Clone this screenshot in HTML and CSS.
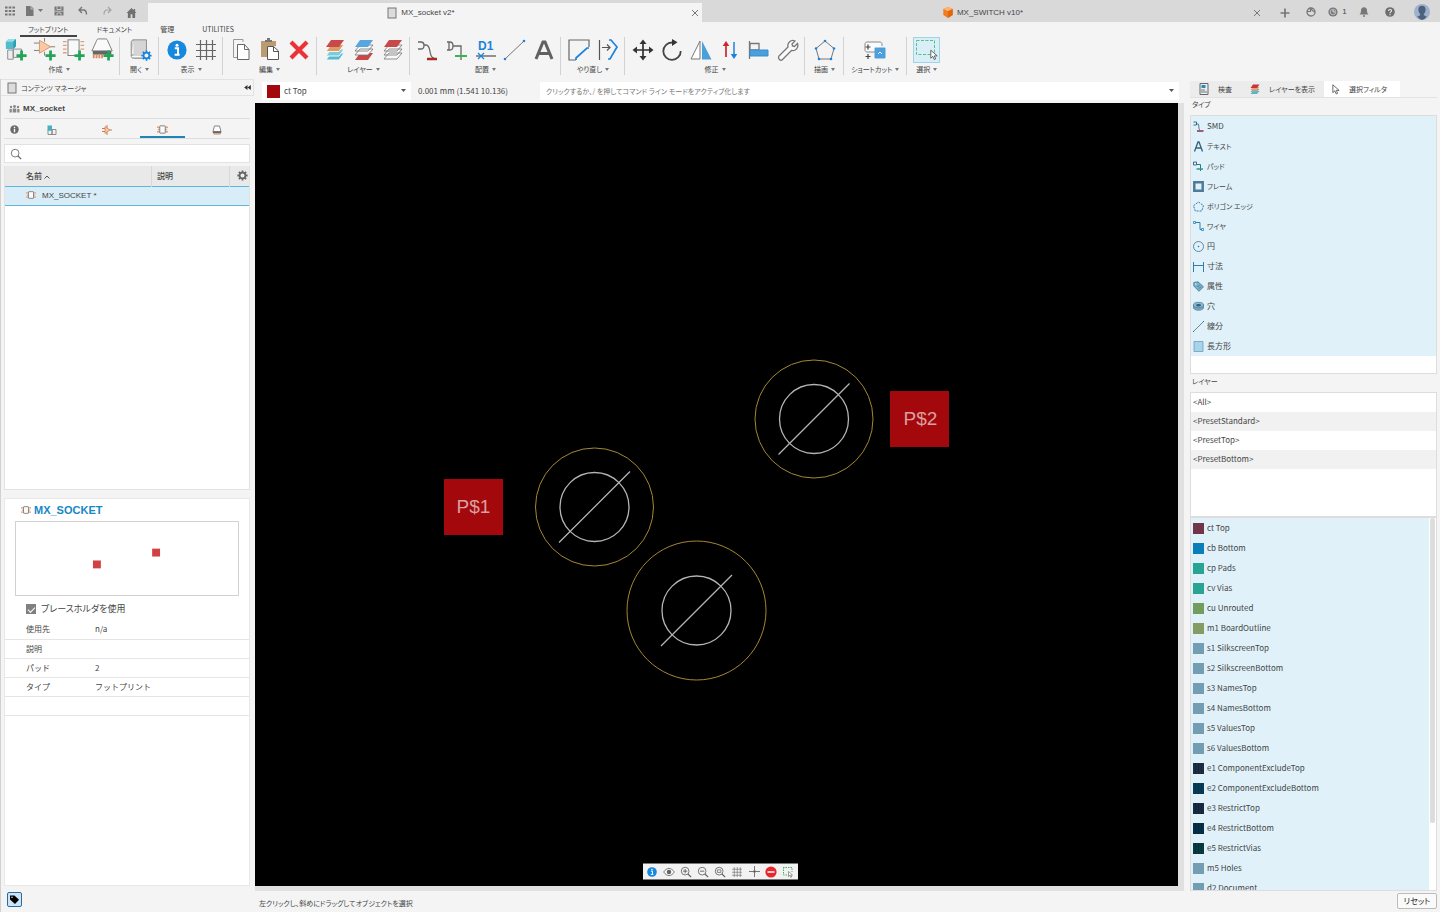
FILE: index.html
```html
<!DOCTYPE html>
<html lang="ja">
<head>
<meta charset="utf-8">
<meta name="viewport" content="width=device-width, initial-scale=1">
<title>MX_socket v2*</title>
<link rel="stylesheet" href="styles.css">
</head>
<body>
<svg class="defs" aria-hidden="true">
  <symbol id="plus" viewBox="0 0 12 12"><path d="M6 0.5v11M0.5 6h11" stroke="#22a45a" stroke-width="3"/></symbol>
  <symbol id="sheet" viewBox="0 0 10 12"><rect x="1" y="1" width="8" height="10" fill="#dcdcdc" stroke="#777"/></symbol>
  <symbol id="chip" viewBox="0 0 12 12"><path d="M0 3.500h3M0 8.500h3M9 3.500h3M9 8.500h3M1 6h2M9 6h2" stroke="#e2a27a" stroke-width="1.500"/><rect x="3" y="2" width="6" height="8" rx="0.5" fill="#fafafa" stroke="#777"/></symbol>
  <symbol id="info" viewBox="0 0 20 20"><circle cx="10" cy="10" r="9.6" fill="#1688de"/><circle cx="10" cy="5.2" r="1.5" fill="#fff"/><path d="M7.8 8.2H11v6.3M7.6 14.8h5" stroke="#fff" stroke-width="2" fill="none"/></symbol>
  <symbol id="grid" viewBox="0 0 24 24"><path d="M6.5 2v20M12.5 2v20M18.500 2v20M2 6.500h20M2 12.500h20M2 18.500h20" stroke="#666" stroke-width="1.2"/></symbol>
  <symbol id="lens" viewBox="0 0 14 14"><circle cx="6" cy="6" r="4.500" fill="none" stroke="#666"/><path d="M9.300 9.300l3.700 3.700" stroke="#666" stroke-width="1.500"/></symbol>
  <symbol id="close" viewBox="0 0 8 8"><path d="M1 1l6 6M7 1L1 7" stroke="#777"/></symbol>
  <symbol id="arrow" viewBox="0 0 10 14"><path d="M1 1v10l2.500-2.300 1.800 4 1.800-.8-1.800-3.800H9z" fill="#fff" stroke="#444"/></symbol>
  <symbol id="gear" viewBox="0 0 14 14"><path d="M7 0.500v13M.5 7h13M2.400 2.400l9.200 9.200M11.600 2.400l-9.200 9.200" stroke="currentColor" stroke-width="2.300"/><circle cx="7" cy="7" r="4.700" fill="currentColor"/><circle cx="7" cy="7" r="2.500" class="gear-hole"/></symbol>
</svg>

<header class="topbar">
  <nav class="quick" aria-label="クイック アクセス">
    <button aria-label="データ パネル"><svg width="10" height="10" viewBox="0 0 10 10"><path d="M0 1.500h10M0 5h10M0 8.500h10" stroke="#777" stroke-width="2.200" stroke-dasharray="2.600 1.100"/></svg></button>
    <button class="wide" aria-label="ファイル"><svg width="18" height="10" viewBox="0 0 18 10"><path d="M1 0h5l2.500 2.500V10H1z" fill="#777"/><path d="M6 0v3h3" stroke="#d9d9d9" fill="none" stroke-width=".7"/><path d="M13 3h5l-2.500 3z" fill="#777"/></svg></button>
    <button aria-label="保存"><svg width="10" height="10" viewBox="0 0 10 10"><path d="M.5.500h9v9h-9z" fill="#777"/><path d="M3 .5v3h4v-3M3 9.500V7h4v2.500M.5 5.200h9" stroke="#d9d9d9" stroke-width=".8" fill="none"/></svg></button>
    <button aria-label="元に戻す"><svg width="10" height="10" viewBox="0 0 10 10"><path d="M4 1L1 4l3 3M1 4h4.500c2 0 3 1.500 3 4.500" fill="none" stroke="#777" stroke-width="1.400"/></svg></button>
    <button aria-label="やり直し"><svg width="10" height="10" viewBox="0 0 10 10"><path d="M6 1l3 3-3 3M9 4H5C3 4 2 5.500 2 8.500" fill="none" stroke="#a5a5a5" stroke-width="1.200"/></svg></button>
    <button class="home" aria-label="ホーム"><svg width="11" height="10" viewBox="0 0 12 11"><path d="M6 0L0.500 5.500H2V11h3V7h2v4h3V5.500h1.500L10 4V1H8.500v1.500z" fill="#707070"/></svg></button>
  </nav>
  <div class="doc-tabs" role="tablist">
    <div class="doc-tab active"><button role="tab" aria-selected="true"><svg width="10" height="12"><use href="#sheet"/></svg>MX_socket v2*</button><button class="close" aria-label="閉じる"><svg width="8" height="8"><use href="#close"/></svg></button></div>
    <div class="doc-tab"><button role="tab"><svg width="10" height="11" viewBox="0 0 10 11"><path d="M5 0l4.700 2v6L5 11 .3 8V2z" fill="#ef7d1f"/><path d="M5 0l4.700 2L5 4.200.3 2z" fill="#ffb36b"/><path d="M5 4.200V11l4.700-3V2z" fill="#df6510"/></svg>MX_SWITCH v10*</button><button class="close" aria-label="閉じる"><svg width="8" height="8"><use href="#close"/></svg></button></div>
  </div>
  <div class="account">
    <button aria-label="新しいタブ"><svg width="10" height="10" viewBox="0 0 10 10"><path d="M5 .5v9M.5 5h9" stroke="#777" stroke-width="1.700"/></svg></button>
    <button aria-label="拡張機能"><svg width="10" height="10" viewBox="0 0 10 10"><circle cx="5" cy="5" r="4" fill="none" stroke="#777" stroke-width="1.300"/><path d="M1 4.500h3.500V1.500L7 4l2 1" fill="none" stroke="#777" stroke-width="1.200"/></svg></button>
    <button aria-label="ジョブ ステータス"><svg width="10" height="10" viewBox="0 0 10 10"><circle cx="5" cy="5" r="4.600" fill="#777"/><circle cx="5" cy="5" r="2.800" fill="none" stroke="#ccc" stroke-width=".8"/><path d="M5 3v2h2" stroke="#ddd" fill="none"/></svg><span>1</span></button>
    <button aria-label="通知"><svg width="10" height="10" viewBox="0 0 10 10"><path d="M5 .3c2 0 3 1.300 3 3.200 0 2 .5 3 1.500 4H.5c1-1 1.500-2 1.500-4C2 1.600 3 .3 5 .3zM4 8.300h2v1.400H4z" fill="#777"/></svg></button>
    <button aria-label="ヘルプ"><svg width="10" height="10" viewBox="0 0 10 10"><circle cx="5" cy="5" r="4.800" fill="#6e6e6e"/><path d="M3.500 4c0-2 3-2 3-.2C6.500 5 5 4.800 5 6.200M5 7v1.200" stroke="#e8e8e8" stroke-width="1.100" fill="none"/></svg></button>
    <button aria-label="プロファイル"><svg width="16" height="16" viewBox="0 0 16 16"><circle cx="8" cy="8" r="8" fill="#9fb2cb"/><path d="M8 1.800c2.500 0 3.600 1.500 3.600 3.700 0 2-.8 3.700-1.800 4.500v1.200l2.900 1.300A8 8 0 0 1 8 16a8 8 0 0 1-4.700-3.500l2.900-1.300V10C5.200 9.200 4.400 7.500 4.400 5.500 4.400 3.300 5.500 1.800 8 1.800z" fill="#4b617e"/></svg></button>
  </div>
</header>

<nav class="ribbon-tabs">
  <button class="active">フットプリント</button><button>ドキュメント</button><button>管理</button><button>UTILITIES</button>
</nav>

<div class="ribbon">
  <section class="group first">
    <div class="tools">
      <button aria-label="新しいコンポーネント"><svg width="24" height="24" viewBox="0 0 26 26"><path d="M10 12h9v9h-9zM4 13h6v10H4z" fill="#eee" stroke="#888"/><path d="M2 4l3-3h8v8l-3 3H2z" fill="#52bccb"/><path d="M2 4l3-3h8l-3 3z" fill="#8fe0e8"/><path d="M10 4v8l3-3V1z" fill="#2fa0b2"/><use href="#plus" x="13" y="13" width="12" height="12"/></svg></button>
      <button aria-label="新しいシンボル"><svg width="24" height="24" viewBox="0 0 26 26"><path d="M1 5.500h8M1 13.500h8M18 9.500h6M12.500 0v4M12.500 15v4" stroke="#777"/><path d="M7 2.500v14l12-7z" fill="#f9c9a5" stroke="#d5966c"/><use href="#plus" x="13" y="13" width="12" height="12"/></svg></button>
      <button aria-label="新しいフットプリント"><svg width="24" height="24" viewBox="0 0 26 26"><path d="M1 4h4M1 8h4M1 12h4M1 16h4M20 4h4M20 8h4M20 12h4" stroke="#e1a077" stroke-width="1.400"/><rect x="6.500" y="2" width="12" height="17" fill="#f8f8f8" stroke="#777"/><use href="#plus" x="13" y="13" width="12" height="12"/></svg></button>
      <button aria-label="新しい 3D パッケージ"><svg width="24" height="24" viewBox="0 0 26 26"><path d="M6 3c0-1 1-2 2-2h8c1 0 2 1 2 2l5 11H1z" fill="#fafafa" stroke="#777"/><path d="M2 14h20v4H2z" fill="#666"/><path d="M3 18v4M6 18v4M9 18v4M12 18v4" stroke="#d88c61" stroke-width="2"/><use href="#plus" x="13" y="13" width="12" height="12"/></svg></button>
    </div><button class="label">作成<i></i></button>
  </section>
  <section class="group single">
    <div class="tools"><button aria-label="開く"><svg width="24" height="24" viewBox="0 0 26 26"><path d="M6 2h14v20H6c-3 0-3-4 0-4M3.500 20V5c0-2 1-3 3-3" fill="#d5d5d5" stroke="#888"/><path d="M4 20h16" stroke="#fff"/><g color="#1c83dd"><use href="#gear" x="14" y="13" width="12" height="12"/></g></svg></button></div><button class="label">開く<i></i></button>
  </section>
  <section class="group">
    <div class="tools">
      <button aria-label="情報"><svg width="20" height="20"><use href="#info"/></svg></button>
      <button aria-label="グリッド"><svg width="24" height="24"><use href="#grid"/></svg></button>
    </div><button class="label">表示<i></i></button>
  </section>
  <section class="group roomy">
    <div class="tools">
      <button aria-label="コピー"><svg width="24" height="26" viewBox="0 0 24 26"><path d="M14 5V2.500H4.500v18H8" fill="none" stroke="#999"/><path d="M8.500 7.500h7l4.500 5v10H8.500z" fill="#fff" stroke="#666"/><path d="M15.500 7.500v5H20" fill="none" stroke="#666"/></svg></button>
      <button aria-label="貼り付け"><svg width="24" height="26" viewBox="0 0 24 26"><path d="M3 4h15v5H9v11H3z" fill="#bd9b70"/><path d="M7 5V3h2V1h3v2h2v2z" fill="#777"/><path d="M9.500 9.500h6l5 4.500v8.500h-11z" fill="#fff" stroke="#555"/><path d="M15.500 9.500v5h5" fill="none" stroke="#555"/></svg></button>
      <button aria-label="削除"><svg width="20" height="20" viewBox="0 0 20 20"><path d="M2 2l16 16M18 2L2 18" stroke="#eb3237" stroke-width="4.200"/></svg></button>
    </div><button class="label">編集<i></i></button>
  </section>
  <section class="group">
    <div class="tools">
      <button aria-label="レイヤー設定"><svg width="20" height="22" viewBox="0 0 20 22"><path d="M6 14h13l-5 7H1z" fill="#51bccd" stroke="#f4f4f4"/><path d="M6 10h13l-5 7H1z" fill="#7dcbdc" stroke="#f4f4f4"/><path d="M6 5.500h13l-5 7H1z" fill="#dc9c63" stroke="#f4f4f4"/><path d="M6 1h13l-5 7H1z" fill="#c9484a"/></svg></button>
      <button aria-label="上面レイヤー"><svg width="20" height="22" viewBox="0 0 20 22"><path d="M6 14h13l-5 7H1z" fill="#c9484a"/><path d="M6 10h13l-5 6H1zM6 6h13l-5 6H1z" fill="#f8f8f8" stroke="#777" stroke-width=".8"/><path d="M6 1h13l-5 7H1z" fill="#57a6de"/></svg></button>
      <button aria-label="レイヤー表示"><svg width="20" height="22" viewBox="0 0 20 22"><path d="M6 14h13l-5 6H1zM6 10h13l-5 6H1zM6 6h13l-5 6H1z" fill="#f8f8f8" stroke="#777" stroke-width=".8"/><path d="M6 1h13l-5 7H1z" fill="#c9484a"/></svg></button>
    </div><button class="label">レイヤー<i></i></button>
  </section>
  <section class="group">
    <div class="tools">
      <button aria-label="SMD"><svg width="24" height="24" viewBox="0 0 24 24"><path d="M2 4h3c4 0 4 7 0 7H2M8 7h2c6 0 2 13 8 13" fill="none" stroke="#666" stroke-width="1.300"/><path d="M11 21h10" stroke="#a8282c" stroke-width="2.500"/></svg></button>
      <button aria-label="パッド"><svg width="24" height="24" viewBox="0 0 24 24"><path d="M2 4h3c4 0 4 8 0 8H2M4 4v8M8 8h8v14" fill="none" stroke="#666" stroke-width="1.300"/><path d="M10 18h12" stroke="#38b653" stroke-width="2"/></svg></button>
      <button aria-label="名前"><svg width="24" height="24" viewBox="0 0 24 24"><text x="4" y="12" class="d1">D1</text><path d="M2 18h20" stroke="#666" stroke-width="1.400"/><path d="M4 15l6 6M10 15l-6 6" stroke="#1c83dd" stroke-width="1.300"/></svg></button>
      <button aria-label="線"><svg width="24" height="24" viewBox="0 0 24 24"><path d="M2 21L21 3" stroke="#777"/><circle cx="2" cy="21" r="1.300" fill="#1c83dd"/><circle cx="21" cy="3" r="1.300" fill="#1c83dd"/></svg></button>
      <button aria-label="テキスト"><svg width="24" height="24" viewBox="0 0 24 24"><path d="M4 21L11 4h2l7 17M7 15.500h10" fill="none" stroke="#616161" stroke-width="3"/></svg></button>
    </div><button class="label">配置<i></i></button>
  </section>
  <section class="group">
    <div class="tools">
      <button aria-label="配線変更"><svg width="24" height="24" viewBox="0 0 24 24"><path d="M22 9V2H2v20h7" fill="none" stroke="#666" stroke-width="1.200"/><path d="M9 22v-2L20 10h2" fill="none" stroke="#1c83dd" stroke-width="1.700"/></svg></button>
      <button aria-label="分割"><svg width="24" height="24" viewBox="0 0 24 24"><path d="M3.500 2v20M6 9.500h8M11 6.500l3 3-3 3" fill="none" stroke="#555" stroke-width="1.200"/><path d="M13 2h2l6 7-7 12h-2" fill="none" stroke="#1c83dd" stroke-width="1.700"/></svg></button>
    </div><button class="label">やり直し<i></i></button>
  </section>
  <section class="group">
    <div class="tools">
      <button aria-label="移動"><svg width="22" height="22" viewBox="0 0 22 22"><path d="M11 3v16M3 11h16" stroke="#333" stroke-width="1.700"/><path d="M11 0.500l3.500 4.500h-7zM11 21.500l3.500-4.500h-7zM.5 11L5 7.500v7zM21.500 11L17 7.500v7z" fill="#333"/></svg></button>
      <button aria-label="回転"><svg width="24" height="24" viewBox="0 0 24 24"><path d="M12 4.500A8.700 8.700 0 1 0 20.700 13" fill="none" stroke="#444" stroke-width="1.800"/><path d="M12 1l5.500 3.300L12 8z" fill="#333"/></svg></button>
      <button aria-label="ミラー"><svg width="22" height="24" viewBox="0 0 22 24"><path d="M10 3v18H1z" fill="#fff" stroke="#777"/><path d="M12 3v18.500h9.500z" fill="#4ba0dc"/></svg></button>
      <button aria-label="整列"><svg width="20" height="22" viewBox="0 0 20 22"><path d="M6 4v14" stroke="#c9272b" stroke-width="1.700"/><path d="M6 2l3.300 5H2.700z" fill="#c9272b"/><path d="M14 3v14" stroke="#1c83dd" stroke-width="1.500"/><path d="M14 20l3.300-5h-6.600z" fill="#1c83dd"/></svg></button>
      <button aria-label="位置合わせ"><svg width="22" height="22" viewBox="0 0 22 22"><path d="M1.500 2v18M2 4.500h9V11H2z" fill="none" stroke="#777" stroke-width="1.300"/><path d="M2 11h18v6H2z" fill="#4ba0dc" stroke="#3a8fcb"/></svg></button>
      <button aria-label="変更"><svg width="22" height="22" viewBox="0 0 22 22"><path d="M2 17l9-9c-1-4 3-8 7-6l-3 3 .5 2 2 .5 3-3c1.500 4-2 8-6 7l-9 9c-2 2-5-1-3.500-3.500z" fill="#fafafa" stroke="#777" stroke-width="1.300"/></svg></button>
    </div><button class="label">修正<i></i></button>
  </section>
  <section class="group single">
    <div class="tools"><button aria-label="描画"><svg width="22" height="22" viewBox="0 0 22 22"><path d="M11 2l9 7.500L17 20H5L2 9.500z" fill="none" stroke="#777"/><g fill="#1c83dd"><circle cx="11" cy="2" r="1.300"/><circle cx="20" cy="9.500" r="1.300"/><circle cx="17" cy="20" r="1.300"/><circle cx="5" cy="20" r="1.300"/><circle cx="2" cy="9.500" r="1.300"/></g></svg></button></div><button class="label">描画<i></i></button>
  </section>
  <section class="group shortcut">
    <div class="tools"><button aria-label="ショートカット"><svg width="22" height="20" viewBox="0 0 22 20"><path d="M18 6V4c0-1-1-2-2-2H3C2 2 1 3 1 4v6c0 1 1 2 2 2h8" fill="#fafafa" stroke="#888"/><path d="M4 4.500v5M1.500 7h5M4 14v5M1.500 16.500h5" stroke="#444" stroke-width="1.200"/><rect x="10.500" y="7.500" width="11" height="11" rx="1" fill="#4ba0dc"/><path d="M14 14l2-2 2 2" fill="none" stroke="#fff"/></svg></button></div><button class="label">ショートカット<i></i></button>
  </section>
  <section class="group single last">
    <div class="tools"><button class="selected" aria-label="選択"><svg width="24" height="24" viewBox="0 0 24 24"><rect x="1.500" y="2.500" width="18" height="14" fill="none" stroke="#50c286" stroke-dasharray="3 1.500"/><use href="#arrow" x="15" y="11" width="8" height="12"/></svg></button></div><button class="label">選択<i></i></button>
  </section>
</div>

<main class="workspace">
  <aside class="manager">
    <h2 class="panel-head"><svg width="10" height="12"><use href="#sheet"/></svg>コンテンツ マネージャ<button aria-label="折りたたむ"><svg width="7" height="5" viewBox="0 0 8 6"><path d="M4 0v6L0 3zM8 0v6L4 3z" fill="#333"/></svg></button></h2>
    <div class="manager-body">
      <h3 class="library"><svg width="11" height="8" viewBox="0 0 11 8"><g fill="#888"><circle cx="2" cy="2" r="1.200"/><circle cx="5.500" cy="1.500" r="1.400"/><circle cx="9" cy="2" r="1.200"/><path d="M.5 4h2.300v3.500H.5zM3.700 3.500h3.600v4H3.700zM8.200 4h2.300v3.500H8.200z"/></g></svg>MX_socket</h3>
      <div class="kind-tabs">
        <button aria-label="情報"><svg width="9" height="9" viewBox="0 0 10 10"><circle cx="5" cy="5" r="4.700" fill="#6b6b6b"/><path d="M5 2v1.300M5 4.300V8" stroke="#fff" stroke-width="1.500"/></svg></button>
        <button aria-label="コンポーネント"><svg width="10" height="10" viewBox="0 0 10 10"><path d="M1 5h4v4.500H1zM5 4.500h4v5H5z" fill="#f2f2f2" stroke="#777" stroke-width=".8"/><path d="M.5.500h4.500v5H.5z" fill="#43b2c2"/></svg></button>
        <button aria-label="シンボル"><svg width="10" height="10" viewBox="0 0 10 10"><path d="M0 3.500h3M0 6.500h3M7 5h3M5 0v10" stroke="#c97e50"/><path d="M3 1.500v7L8 5z" fill="#f7c6a2" stroke="#d2875a" stroke-width=".8"/></svg></button>
        <button class="active" aria-label="フットプリント"><svg width="11" height="11"><use href="#chip"/></svg></button>
        <button aria-label="パッケージ"><svg width="10" height="10" viewBox="0 0 10 10"><path d="M2.500 1h5L9 6.500H1z" fill="#fff" stroke="#777" stroke-width=".9"/><path d="M.8 6.500h8.400v1.800H.8z" fill="#666"/><path d="M1.500 9h7" stroke="#d0875c"/></svg></button>
      </div>
      <label class="search"><svg width="12" height="12"><use href="#lens"/></svg><input type="search" aria-label="検索"></label>
      <div class="list-box">
        <table class="items">
          <thead><tr><th class="name">名前 <svg width="6" height="4" viewBox="0 0 6 4"><path d="M.5 3.500L3 1l2.500 2.500" fill="none" stroke="#555"/></svg></th><th>説明</th><th class="tool"><button class="settings" aria-label="設定"><svg width="11" height="11"><use href="#gear"/></svg></button></th></tr></thead>
          <tbody><tr><td class="item" colspan="3"><svg width="10" height="10"><use href="#chip"/></svg>MX_SOCKET *</td></tr></tbody>
        </table>
      </div>
      <section class="details">
        <h3><svg width="10" height="10"><use href="#chip"/></svg>MX_SOCKET</h3>
        <svg class="preview" viewBox="0 0 223 74" aria-label="プレビュー"><rect x="77" y="39" width="8" height="8"/><rect x="137" y="27" width="8" height="8"/></svg>
        <label class="check"><input type="checkbox" checked>プレースホルダを使用</label>
        <table class="props">
          <tr><th>使用先</th><td>n/a</td></tr>
          <tr><th>説明</th><td></td></tr>
          <tr><th>パッド</th><td>2</td></tr>
          <tr><th>タイプ</th><td>フットプリント</td></tr>
          <tr><th></th><td></td></tr>
        </table>
      </section>
    </div>
    <footer><button class="tag" aria-label="タグ"><svg width="9" height="9" viewBox="0 0 9 9"><path d="M0 .5h4.500L9 4.800 5 9 0 4.500z"/><circle cx="2" cy="2.200" r=".8" fill="#cce4f6"/></svg></button></footer>
  </aside>

  <section class="editor">
    <div class="command">
      <div class="layer-pick"><span class="swatch"></span><select aria-label="レイヤー"><option>ct Top</option></select><svg width="5" height="4" viewBox="0 0 5 4"><path d="M0 0h5L2.500 3z" fill="#555"/></svg></div>
      <output>0.001 mm (1.541 10.136)</output>
      <div class="prompt"><input type="text" aria-label="コマンド" placeholder="クリックするか、/ を押してコマンド ライン モードをアクティブ化します"><svg width="5" height="4" viewBox="0 0 5 4"><path d="M0 0h5L2.500 3z" fill="#555"/></svg></div>
    </div>
    <div class="stage">
      <svg class="board" viewBox="0 0 923 783">
        <g fill="#a3080c"><rect x="189" y="376" width="59" height="56"/><rect x="635" y="288" width="59" height="56"/></g>
        <g class="pad-name"><text x="218.500" y="410">P$1</text><text x="665.500" y="322">P$2</text></g>
        <g fill="none" stroke="#a48835"><circle cx="339.500" cy="404" r="59"/><circle cx="559" cy="316" r="59"/><circle cx="441.500" cy="507.500" r="69.500"/></g>
        <g fill="none" stroke="#b4b4b4" stroke-width="1.300"><circle cx="339.500" cy="404" r="34.500"/><circle cx="559" cy="316" r="34.500"/><circle cx="441.500" cy="507.500" r="34.500"/><path d="M304 439.500l71-71M523.500 351.500l71-71M406 543l71-71"/></g>
      </svg>
      <div class="view-bar">
        <button aria-label="情報"><svg width="10" height="10"><use href="#info"/></svg></button>
        <button aria-label="表示"><svg width="12" height="10" viewBox="0 0 12 10"><path d="M.7 5c3-4.700 7.600-4.700 10.600 0-3 4.700-7.600 4.700-10.600 0z" fill="#fff" stroke="#777"/><circle cx="6" cy="5" r="2.300" fill="#666"/></svg></button>
        <button aria-label="拡大"><svg width="12" height="12" viewBox="0 0 14 14"><use href="#lens" width="14" height="14"/><path d="M3.500 6h5M6 3.500v5" stroke="#555"/></svg></button>
        <button aria-label="縮小"><svg width="12" height="12" viewBox="0 0 14 14"><use href="#lens" width="14" height="14"/><path d="M3.500 6h5" stroke="#555"/></svg></button>
        <button aria-label="フィット"><svg width="12" height="12" viewBox="0 0 14 14"><use href="#lens" width="14" height="14"/><path d="M4 4.500h4v3H4z" fill="none" stroke="#777"/></svg></button>
        <button aria-label="グリッド"><svg width="12" height="12"><use href="#grid"/></svg></button>
        <button aria-label="原点"><svg width="11" height="11" viewBox="0 0 11 11"><path d="M5.500 0v4M5.500 7v4M0 5.500h4M7 5.500h4" stroke="#777"/><circle cx="5.500" cy="5.500" r="1.200" fill="#444"/></svg></button>
        <button aria-label="停止"><svg width="12" height="12" viewBox="0 0 12 12"><circle cx="6" cy="6" r="5.600" fill="#e8282d"/><path d="M2.500 6h7" stroke="#fff" stroke-width="1.500"/></svg></button>
        <button aria-label="選択"><svg width="12" height="12" viewBox="0 0 12 12"><path d="M1 1.500h9V6M1.500 1v8h5" fill="none" stroke="#42ae6a" stroke-dasharray="1.500 1"/><use href="#arrow" x="6" y="5" width="5" height="7"/></svg></button>
      </div>
    </div>
    <p class="hint">左クリックし、斜めにドラッグしてオブジェクトを選択</p>
  </section>

  <aside class="filters">
    <div class="filter-tabs">
      <button><svg width="10" height="12" viewBox="0 0 10 12"><path d="M1 .5h8v11H1z" fill="#e8eef2" stroke="#666"/><path d="M2.500 2h4v3h-4z" fill="#2e88bc"/><path d="M2 7h4M2 9h6" stroke="#777"/></svg>検査</button>
      <button><svg width="10" height="11" viewBox="0 0 20 22"><path d="M6 14h13l-5 6H1z" fill="#4fb8c9"/><path d="M6 10h13l-5 6H1z" fill="#9fa5a8"/><path d="M6 6h13l-5 6H1z" fill="#e2a073"/><path d="M6 1h13l-5 7H1z" fill="#c3373b"/></svg>レイヤーを表示</button>
      <button class="active"><svg width="8" height="11"><use href="#arrow"/></svg>選択フィルタ</button>
    </div>
    <h4>タイプ</h4>
    <ul class="types">
      <li><svg viewBox="0 0 11 11"><path d="M.5 1h3v3h-3M4 3h1c1.500 0 0 5 2 6" fill="none" stroke="#3a6f90"/><path d="M4 10h6.500" stroke="#8f2946" stroke-width="1.500"/></svg>SMD</li>
      <li class="kana"><svg viewBox="0 0 11 11"><path d="M1.500 10.500L5 1h1l3.500 9.500M3 7h5" fill="none" stroke="#34617a" stroke-width="1.300"/></svg>テキスト</li>
      <li class="kana"><svg viewBox="0 0 11 11"><path d="M.5 1h3v3h-3zM4 3.500h3.500V10" fill="none" stroke="#3a6f90"/><path d="M3.500 8h6.500" stroke="#27a27c" stroke-width="1.500"/></svg>パッド</li>
      <li class="kana"><svg viewBox="0 0 11 11"><path d="M1.300 1.300h8.400v8.400H1.300z" fill="#e2f1f9" stroke="#4c7c99" stroke-width="2.500"/></svg>フレーム</li>
      <li class="kana"><svg viewBox="0 0 11 11"><path d="M5.500 1l5 3.600L8.700 10H2.300L.5 4.600z" fill="none" stroke="#2e7fae" stroke-dasharray="2 1"/></svg>ポリゴン エッジ</li>
      <li class="kana"><svg viewBox="0 0 11 11"><path d="M2 1.500h5v7h2" fill="none" stroke="#2e7fae"/><path d="M.5.500h2v2h-2zM8.500 7.500h2v2h-2z" fill="#e2f1f9" stroke="#2e7fae" stroke-width=".8"/></svg>ワイヤ</li>
      <li><svg viewBox="0 0 11 11"><circle cx="5.500" cy="5.500" r="5" fill="none" stroke="#456f88" stroke-width=".8"/><circle cx="5.500" cy="5.500" r=".8" fill="#0b79b8"/></svg>円</li>
      <li><svg viewBox="0 0 11 11"><path d="M.5 1v10M10.500 1v10M1 4.500h9" fill="none" stroke="#2e7fae"/></svg>寸法</li>
      <li><svg viewBox="0 0 11 11"><path d="M.8 1.500L5 .8l5.500 5L6 10.300.8 5z" fill="#77b2cd" stroke="#44728b" stroke-width=".8"/><circle cx="2.700" cy="3" r=".8" fill="#e2f1f9"/><path d="M4.500 6l2-2M6 7.500l2-2" stroke="#315f78" stroke-width=".7"/></svg>属性</li>
      <li><svg viewBox="0 0 11 11"><path d="M.5 4v3c1 3 9 3 10 0V4z" fill="#72aac5" stroke="#4a7991" stroke-width=".7"/><ellipse cx="5.500" cy="4" rx="5" ry="2.700" fill="#8bbbd0" stroke="#4a7991" stroke-width=".7"/><ellipse cx="5.500" cy="4.300" rx="2.500" ry="1.300" fill="#345f75"/></svg>穴</li>
      <li><svg viewBox="0 0 11 11"><path d="M.5 10.500l10-10" stroke="#456f88" stroke-width=".8"/><path d="M0 10h1v1H0zM10 0h1v1h-1z" fill="#0b79b8"/></svg>線分</li>
      <li><svg viewBox="0 0 11 11"><path d="M1 .5h9v10H1z" fill="#a9d3e8" stroke="#6b9eb9" stroke-width=".8"/></svg>長方形</li>
    </ul>
    <h4>レイヤー</h4>
    <ul class="presets"><li>&lt;All&gt;</li><li>&lt;PresetStandard&gt;</li><li>&lt;PresetTop&gt;</li><li>&lt;PresetBottom&gt;</li></ul>
    <div class="layers">
      <ul>
        <li><i class="top"></i>ct Top</li><li><i class="bottom"></i>cb Bottom</li><li><i class="via"></i>cp Pads</li><li><i class="via"></i>cv Vias</li><li><i class="unrouted"></i>cu Unrouted</li><li><i class="outline"></i>m1 BoardOutline</li><li><i></i>s1 SilkscreenTop</li><li><i></i>s2 SilkscreenBottom</li><li><i></i>s3 NamesTop</li><li><i></i>s4 NamesBottom</li><li><i></i>s5 ValuesTop</li><li><i></i>s6 ValuesBottom</li><li><i class="hatch ex-top"></i>e1 ComponentExcludeTop</li><li><i class="hatch ex-bottom"></i>e2 ComponentExcludeBottom</li><li><i class="hatch re-top"></i>e3 RestrictTop</li><li><i class="hatch re-bottom"></i>e4 RestrictBottom</li><li><i class="hatch re-via"></i>e5 RestrictVias</li><li><i></i>m5 Holes</li><li><i></i>d2 Document</li>
      </ul>
      <div class="track"><div class="thumb"></div></div>
    </div>
    <footer><button class="reset">リセット</button></footer>
  </aside>
</main>
</body>
</html>
```
FILE: styles.css
```css
* { box-sizing: border-box; }
body {
  margin: 0;
  height: 100vh;
  display: flex;
  flex-direction: column;
  overflow: hidden;
  background: #f4f4f4;
  color: #444;
  font: 8px/12px "Noto Sans CJK JP", sans-serif;
  font-feature-settings: "palt";
}
button, input, select {
  margin: 0;
  padding: 0;
  border: 0;
  background: none;
  color: inherit;
  font: inherit;
  font-feature-settings: inherit;
}
button { display: flex; align-items: center; justify-content: center; }
h2, h3, h4, p, ul { margin: 0; padding: 0; font-weight: normal; font-size: inherit; }
ul { list-style: none; }
svg { flex: none; display: block; }
.defs { position: absolute; width: 0; height: 0; }
.gear-hole { fill: #f0f0f0; }

/* document bar */
.topbar { display: flex; flex: none; height: 22px; padding-top: 3px; background: #d9d9d9; font-family: "Liberation Sans", sans-serif; }
.quick { display: flex; width: 148px; padding-right: 3px; }
.quick button { width: 24px; padding-bottom: 3px; }
.quick button:first-child { width: 20px; }
.quick .wide { width: 28px; }
.quick .home { width: 27px; padding-bottom: 0; }
.doc-tabs { display: flex; flex: 1; }
.doc-tab { display: flex; flex: 1; align-items: center; justify-content: center; padding-left: 14px; }
.doc-tab.active { padding-left: 6px; background: #f4f4f4; }
.doc-tab button { gap: 4px; flex: 1; }
.doc-tab .close { flex: none; width: 14px; }
.account { display: flex; width: 176px; padding-left: 8px; }
.account button { width: 27px; gap: 4px; padding-bottom: 2px; }
.account button:first-child { padding-bottom: 0; }
.account button:last-child { margin-left: auto; width: 38px; }

/* ribbon */
.ribbon-tabs { display: flex; flex: none; gap: 12px; height: 15px; padding-left: 20px; font-size: 7px; }
.ribbon-tabs button { padding: 0 8px; border-bottom: 2px solid transparent; }
.ribbon-tabs .active { border-color: #444; }
.ribbon { display: flex; flex: none; height: 42px; padding-bottom: 4px; }
.group { display: flex; flex-direction: column; align-items: center; padding: 0 2px 0 3px; border-right: 1px solid #d2d2d2; }
.group.first { padding: 0 2px 0 1px; }
.group.single { padding: 0 4px 0 5px; }
.group.shortcut { padding: 0 7px; }
.group.roomy { padding: 0 3px; }
.group.last { border: 0; }
.tools { display: flex; height: 26px; }
.tools button { width: 29px; height: 26px; }
.tools .selected { width: 27px; margin: 0 1px; background: #d9eef7; border: 1px solid #9fd3e6; }
.label { gap: 3px; height: 12px; white-space: nowrap; font-size: 7px; }
.label i { border: 2px solid transparent; border-top: 3px solid #777; border-bottom: 0; }
.d1 { font: bold 12px "Liberation Sans", sans-serif; fill: #1c83dd; }

.workspace { display: flex; flex: 1; min-height: 0; }

/* content manager */
.manager { display: flex; flex-direction: column; width: 255px; padding-right: 1px; border-left: 1px solid #d0d0d0; }
.panel-head { display: flex; align-items: center; gap: 4px; height: 17px; padding-left: 6px; border: 1px solid #e2e2e2; border-left: 0; font-size: 7px; }
.panel-head button { width: 12px; margin-left: auto; }
.manager-body { display: flex; flex-direction: column; flex: 1; padding: 0 4px 0 3px; }
.library { display: flex; align-items: center; gap: 3px; height: 23px; padding: 3px 5px 0; border-bottom: 1px solid #ddd; font: bold 8px/12px "Liberation Sans", sans-serif; }
.kind-tabs { display: grid; grid-template-columns: 20px repeat(4, 1fr); height: 20px; padding-right: 5px; border-bottom: 1px solid #ddd; }
.kind-tabs button { margin: 0 5px; border-bottom: 2px solid transparent; padding-top: 4px; }
.kind-tabs .active { border-color: #2184b5; }
.search { display: flex; align-items: center; height: 19px; margin-top: 5px; padding-left: 5px; background: #fff; border: 1px solid #e2e2e2; }
.search input { flex: 1; min-width: 0; outline: 0; padding: 0 4px; }
.list-box { flex: 1; margin-top: 3px; background: #fff; border: 1px solid #e2e2e2; border-top: 0; }
.items { width: 100%; border-collapse: collapse; table-layout: fixed; }
.items th { height: 20px; padding: 0 5px; background: #e9e9e9; text-align: left; font-weight: 500; border-right: 1px solid #d8d8d8; }
.items .name { width: 60%; padding-left: 21px; }
.items .name svg, .item svg { display: inline-block; vertical-align: middle; }
.items .tool { width: 20px; padding: 0; border: 0; }
.settings { width: 14px; height: 14px; margin-left: auto; color: #666; }
.items .item { height: 19px; padding: 0 0 0 21px; background: #d8edf8; border-top: 1px solid #62b5dc; border-bottom: 1px solid #62b5dc; font-family: "Liberation Sans", sans-serif; }
.item svg { margin-right: 6px; }
.details { height: 388px; margin-top: 8px; padding-top: 3px; background: #fff; border: 1px solid #e8e8e8; }
.details h3 { display: flex; align-items: center; gap: 3px; height: 16px; padding-left: 16px; color: #1687c5; font: bold 11px/16px "Liberation Sans", sans-serif; }
.preview { display: block; width: calc(100% - 20px); height: 75px; margin: 3px 10px 0; border: 1px solid #d2d2d2; fill: #cf4144; }
.check { display: flex; align-items: center; gap: 5px; height: 24px; padding: 2px 0 0 21px; font-size: 9px; }
.check input { appearance: none; display: grid; place-items: center; width: 10px; height: 10px; background: #808080; }
.check input::after { content: ""; width: 6px; height: 3px; border: solid #fff; border-width: 0 0 1px 1px; transform: rotate(-45deg); }
.props { width: 100%; border-collapse: collapse; font-feature-settings: normal; }
.props tr { border-bottom: 1px solid #e5e5e5; }
.props th, .props td { height: 19px; padding: 0; line-height: 10px; text-align: left; font-weight: normal; }
.props th { width: 90px; padding-left: 21px; }
.manager footer { flex: none; height: 26px; padding: 6px; }
.tag { width: 15px; height: 15px; background: #cce4f6; border: 1px solid #276da5; border-radius: 2px; }

/* editor */
.editor { display: flex; flex-direction: column; flex: 1; min-width: 0; }
.command { display: flex; align-items: center; height: 24px; padding-left: 7px; }
.layer-pick, .prompt { display: flex; align-items: center; height: 18px; background: #fff; padding: 0 5px; }
.layer-pick { width: 149px; }
.swatch { width: 13px; height: 13px; background: #a3080c; }
.layer-pick select { appearance: none; flex: 1; padding-left: 4px; }
.command output { width: 129px; padding-left: 7px; white-space: nowrap; }
.prompt { flex: 1; margin-right: 5px; font-size: 7px; }
.prompt input { flex: 1; outline: 0; padding: 0 1px; }
.prompt input::placeholder { color: #777; opacity: 1; }
.stage { position: relative; flex: 1; min-height: 0; background: #000; border-right: 6px solid #e0e0e0; border-bottom: 5px solid #e0e0e0; }
.board { width: 100%; height: 100%; }
.pad-name { font: 19px "Liberation Sans", sans-serif; fill: #d9a0a0; text-anchor: middle; }
.view-bar { position: absolute; left: 42%; bottom: 6px; display: flex; height: 17px; padding: 0 1px; background: #f2f2f2; border: solid #777; border-width: 1px 0; }
.view-bar button { width: 17px; }
.hint { height: 21px; padding: 6px 4px 0; font-size: 7px; }

/* selection filter */
.filters { display: flex; flex-direction: column; width: 256px; padding: 2px 3px 0 6px; }
.filter-tabs { display: flex; height: 17px; border-bottom: 1px solid #e2e2e2; font-size: 7px; }
.filter-tabs button { gap: 9px; padding: 0 9px; background: #ececec; }
.filter-tabs .active { background: #fff; padding: 0 13px 0 8px; }
.filters h4 { height: 17px; padding-left: 2px; line-height: 13px; font-size: 7px; }
.types, .presets, .layers { background: #fff; border: 1px solid #ddd; }
.types { height: 259px; }
.types li, .layers li { display: flex; align-items: center; gap: 3px; height: 20px; padding-left: 2px; background: #e0f1f9; }
.types .kana { font-size: 7px; }
.types svg { width: 11px; height: 11px; }
.types + h4 { height: 18px; line-height: 15px; }
.presets { height: 125px; }
.presets li { height: 19px; padding-left: 2px; line-height: 18px; }
.presets li:nth-child(even) { background: #f1f1f1; }
.layers { display: flex; flex: 1; min-height: 0; overflow: hidden; }
.layers ul { flex: 1; }
.layers i { width: 11px; height: 11px; background: #739db2; }
.layers .top { background: #703548; }
.layers .bottom { background: #087fb9; }
.layers .via { background: #27a592; }
.layers .unrouted { background: #729d5c; }
.layers .outline { background: #849b63; }
.layers .hatch { background-image: repeating-linear-gradient(90deg, transparent 0 2px, #0003 2px 3px); }
.layers .ex-top { background-color: #1c2f43; }
.layers .ex-bottom { background-color: #063e5a; }
.layers .re-top { background-color: #152c42; }
.layers .re-bottom { background-color: #05304a; }
.layers .re-via { background-color: #063c42; }
.track { width: 7px; padding: 0 1px; }
.thumb { height: 82%; background: #ddd; border-radius: 2px; }
.filters footer { display: flex; flex: none; height: 21px; padding: 2px 0 3px; justify-content: flex-end; }
.reset { width: 40px; background: #fafafa; border: 1px solid #bbb; border-radius: 2px; color: #222; }
```
